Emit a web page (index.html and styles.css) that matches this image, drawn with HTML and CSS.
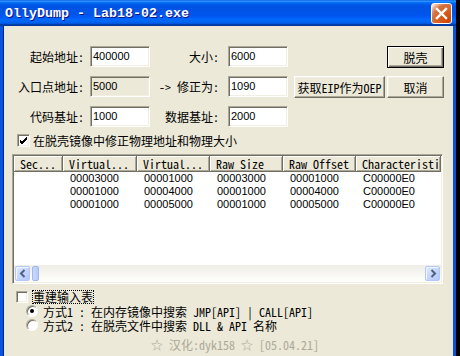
FILE: index.html
```html
<!DOCTYPE html>
<html>
<head>
<meta charset="utf-8">
<link rel="stylesheet" href="styles.css">
</head>
<body>

<div class="window">
  <div class="titlebar">
    <span class="title">OllyDump - Lab18-02.exe</span>
    <span class="close">
      <svg width="19" height="19" viewBox="0 0 19 19"><path d="M5 5 L14 14 M14 5 L5 14" stroke="#fff" stroke-width="2.4" stroke-linecap="square"/></svg>
    </span>
  </div>

  <div class="client">
    <div class="fields">
      <span class="lbl">起始地址:</span>
      <span class="edit">400000</span>
      <span class="lbl lbl2">大小:</span>
      <span class="edit">6000</span>
      <span></span>
      <button class="btn default">脱壳</button>

      <span class="lbl">入口点地址:</span>
      <span class="edit disabled">5000</span>
      <span class="lbl lbl2">-> 修正为:</span>
      <span class="edit">1090</span>
      <button class="btn eip">获取EIP作为OEP</button>
      <button class="btn">取消</button>

      <span class="lbl">代码基址:</span>
      <span class="edit">1000</span>
      <span class="lbl lbl2">数据基址:</span>
      <span class="edit">2000</span>
    </div>

    <div class="check-row fix">
      <span class="check on">
        <svg width="9" height="9" viewBox="0 0 9 9"><path d="M1 4 L3 6 L8 1 M1 5 L3 7 L8 2 M1 6 L3 8 L8 3" stroke="#000" stroke-width="1" fill="none"/></svg>
      </span>
      <span>在脱壳镜像中修正物理地址和物理大小</span>
    </div>

    <div class="listview">
      <div class="lv-head">
        <div class="hcell c1">Sec...</div>
        <div class="hcell c2">Virtual...</div>
        <div class="hcell c3">Virtual...</div>
        <div class="hcell c4">Raw Size</div>
        <div class="hcell c5">Raw Offset</div>
        <div class="hcell c6">Characteristics</div>
      </div>
      <div class="lv-body">
        <div class="lv-row">
          <div class="cell c1"></div><div class="cell c2">00003000</div><div class="cell c3">00001000</div>
          <div class="cell c4">00003000</div><div class="cell c5">00001000</div><div class="cell c6">C00000E0</div>
        </div>
        <div class="lv-row">
          <div class="cell c1"></div><div class="cell c2">00001000</div><div class="cell c3">00004000</div>
          <div class="cell c4">00001000</div><div class="cell c5">00004000</div><div class="cell c6">C00000E0</div>
        </div>
        <div class="lv-row">
          <div class="cell c1"></div><div class="cell c2">00001000</div><div class="cell c3">00005000</div>
          <div class="cell c4">00001000</div><div class="cell c5">00005000</div><div class="cell c6">C00000E0</div>
        </div>
      </div>
      <div class="hscroll">
        <span class="sb-btn">
          <svg width="8" height="9" viewBox="0 0 8 9"><path d="M5.5 1 L2 4.5 L5.5 8" stroke="#4d6185" stroke-width="2" fill="none"/></svg>
        </span>
        <span class="sb-thumb"></span>
        <span class="sb-track"></span>
        <span class="sb-btn">
          <svg width="8" height="9" viewBox="0 0 8 9"><path d="M2.5 1 L6 4.5 L2.5 8" stroke="#4d6185" stroke-width="2" fill="none"/></svg>
        </span>
      </div>
    </div>

    <div class="check-row rebuild">
      <span class="check"></span>
      <span class="focus">重建输入表</span>
    </div>
    <div class="radio-row">
      <span class="radio on"></span>
      <span>方式1 : 在内存镜像中搜索 JMP[API] | CALL[API]</span>
    </div>
    <div class="radio-row">
      <span class="radio"></span>
      <span>方式2 : 在脱壳文件中搜索 DLL &amp; API 名称</span>
    </div>
    <div class="credit">☆ 汉化:dyk158 ☆ [05.04.21]</div>
  </div>
</div>

</body>
</html>
```

FILE: styles.css
```css
* {
  box-sizing: border-box;
}

body {
  margin: 0;
  width: 460px;
  height: 356px;
  overflow: hidden;
  background: #000;
  font-family: "Noto Sans Mono CJK SC", "Noto Sans CJK SC", monospace;
  font-size: 12px;
  line-height: 13px;
  color: #000;
}

.window {
  width: 456px;
  height: 356px;
  display: flex;
  flex-direction: column;
}

/* title bar */
.titlebar {
  height: 26px;
  display: flex;
  align-items: center;
  justify-content: space-between;
  padding: 0 4px 0 5px;
  background: linear-gradient(180deg, #0058ee 0%, #3593ff 4%, #288eff 6%, #127dff 8%, #036ffc 10%, #0262ee 14%, #0057e5 20%, #0054e3 24%, #0055eb 56%, #005bf5 66%, #026afe 76%, #0062ef 86%, #0052d6 92%, #0040ab 94%, #003092 100%);
}

.title {
  font-family: "Liberation Mono", monospace;
  font-weight: bold;
  font-size: 13.33px;
  line-height: 16px;
  color: #fff;
  text-shadow: 1px 1px #0f1089;
  padding-top: 1px;
}

.close {
  width: 21px;
  height: 21px;
  border: 1px solid #fff;
  border-radius: 3px;
  display: flex;
  align-items: center;
  justify-content: center;
  background: radial-gradient(circle at 90% 90%, #cc4600 0%, #dc6527 55%, #cd7546 70%, #ffccb2 90%, #fff 100%);
}

/* dialog body */
.client {
  flex: 1;
  background: #ece9d8;
  border-left: 3px solid #0855dd;
  border-right: 3px solid #0855dd;
  box-shadow: inset 1px 0 #001ea0;
}

.fields {
  display: grid;
  grid-template-columns: 87px 60px 78px 60px 99px 57px;
  grid-template-rows: 21px 21px 21px;
  row-gap: 9px;
  padding-top: 20px;
  align-items: center;
}

.lbl {
  text-align: right;
  padding-right: 6px;
  white-space: nowrap;
}

.lbl2 {
  padding-right: 9px;
}

.edit {
  height: 21px;
  width: 60px;
  background: #fff;
  border: 1px solid;
  border-color: #aca899 #fff #fff #aca899;
  box-shadow: inset 1px 1px #716f64, inset -1px -1px #f1efe2;
  font-family: "Liberation Sans", sans-serif;
  font-size: 11px;
  line-height: 19px;
  padding-left: 2px;
}

.edit.disabled {
  background: #ece9d8;
}

.btn {
  height: 22px;
  margin: 0;
  padding: 0;
  font: inherit;
  color: #000;
  background: #ece9d8;
  border: 1px solid;
  border-color: #fff #716f64 #716f64 #fff;
  box-shadow: inset -1px -1px #aca899, inset 1px 1px #f1efe2;
  align-self: start;
}

.btn.default {
  border-color: #000;
  box-shadow: inset 1px 1px #fff, inset -1px -1px #716f64, inset -2px -2px #aca899;
}

.btn.eip {
  width: 91px;
  margin-left: 6px;
}

/* checkboxes and radios */
.check-row {
  display: flex;
  align-items: center;
  gap: 3px;
  height: 13px;
}

.fix {
  margin-top: 7px;
  padding-left: 14px;
}

.check {
  flex: none;
  width: 13px;
  height: 13px;
  background: #fff;
  border: 1px solid;
  border-color: #aca899 #fff #fff #aca899;
  box-shadow: inset 1px 1px #716f64, inset -1px -1px #f1efe2;
  display: flex;
  align-items: center;
  justify-content: center;
}

.rebuild {
  margin-top: 5px;
  padding-left: 13px;
  height: 15px;
  gap: 4px;
}

.rebuild .check {
  width: 12px;
  height: 12px;
}

.focus {
  border: 1px dotted #000;
  line-height: 12px;
}

.radio-row {
  display: flex;
  align-items: center;
  gap: 5px;
  height: 14px;
  padding-left: 23px;
}

.radio {
  flex: none;
  width: 12px;
  height: 12px;
  border-radius: 50%;
  background: #fff;
  border: 1px solid;
  border-color: #aca899 #fff #fff #aca899;
  box-shadow: inset 1px 1px #716f64;
  display: flex;
  align-items: center;
  justify-content: center;
}

.radio.on::after {
  content: "";
  width: 4px;
  height: 4px;
  border-radius: 50%;
  background: #000;
}

.credit {
  margin-top: 7px;
  padding-left: 148px;
  color: #aca899;
  line-height: 12px;
}

/* list view */
.listview {
  margin: 7px 0 0 9px;
  width: 431px;
  height: 130px;
  border: 1px solid;
  border-color: #aca899 #fff #fff #aca899;
  box-shadow: inset 1px 1px #716f64, inset -1px -1px #f1efe2;
  background: #fff;
  padding: 1px;
  display: flex;
  flex-direction: column;
  overflow: hidden;
}

.lv-head {
  display: flex;
  height: 16px;
  flex: none;
  overflow: hidden;
}

.hcell {
  flex: none;
  height: 16px;
  line-height: 15px;
  padding-left: 6px;
  white-space: nowrap;
  overflow: hidden;
  background: #ece9d8;
  border-right: 1px solid #716f64;
  border-bottom: 1px solid #716f64;
  box-shadow: inset 1px 1px #fff, inset -1px -1px #aca899;
}

.c1 { width: 49px; }
.c2 { width: 74px; }
.c3 { width: 73px; }
.c4 { width: 73px; }
.c5 { width: 73px; }
.c6 { width: 85px; }

.lv-body {
  flex: 1;
}

.lv-row {
  display: flex;
  height: 13px;
}

.cell {
  flex: none;
  padding-left: 7px;
  font-family: "Liberation Sans", sans-serif;
  font-size: 11px;
  line-height: 13px;
  white-space: nowrap;
}

.hscroll {
  flex: none;
  height: 17px;
  display: flex;
  align-items: center;
  padding: 0 1px;
  background: linear-gradient(180deg, #eeede5 0%, #f3f1ec 25%, #fbfbf8 75%, #fefefe 100%);
}

.sb-btn {
  width: 15px;
  height: 15px;
  border: 1px solid #b4c8f6;
  border-radius: 2px;
  background: linear-gradient(135deg, #e1eafe 0%, #c6d6fc 50%, #b3c8fb 100%);
  box-shadow: inset 1px 1px #f0f5ff;
  display: flex;
  align-items: center;
  justify-content: center;
}

.sb-thumb {
  width: 7px;
  height: 15px;
  margin-left: 2px;
  border: 1px solid #9fb8f0;
  border-radius: 2px;
  background: linear-gradient(90deg, #c9d8fc, #b7cbfa);
}

.sb-track {
  flex: 1;
}
```
